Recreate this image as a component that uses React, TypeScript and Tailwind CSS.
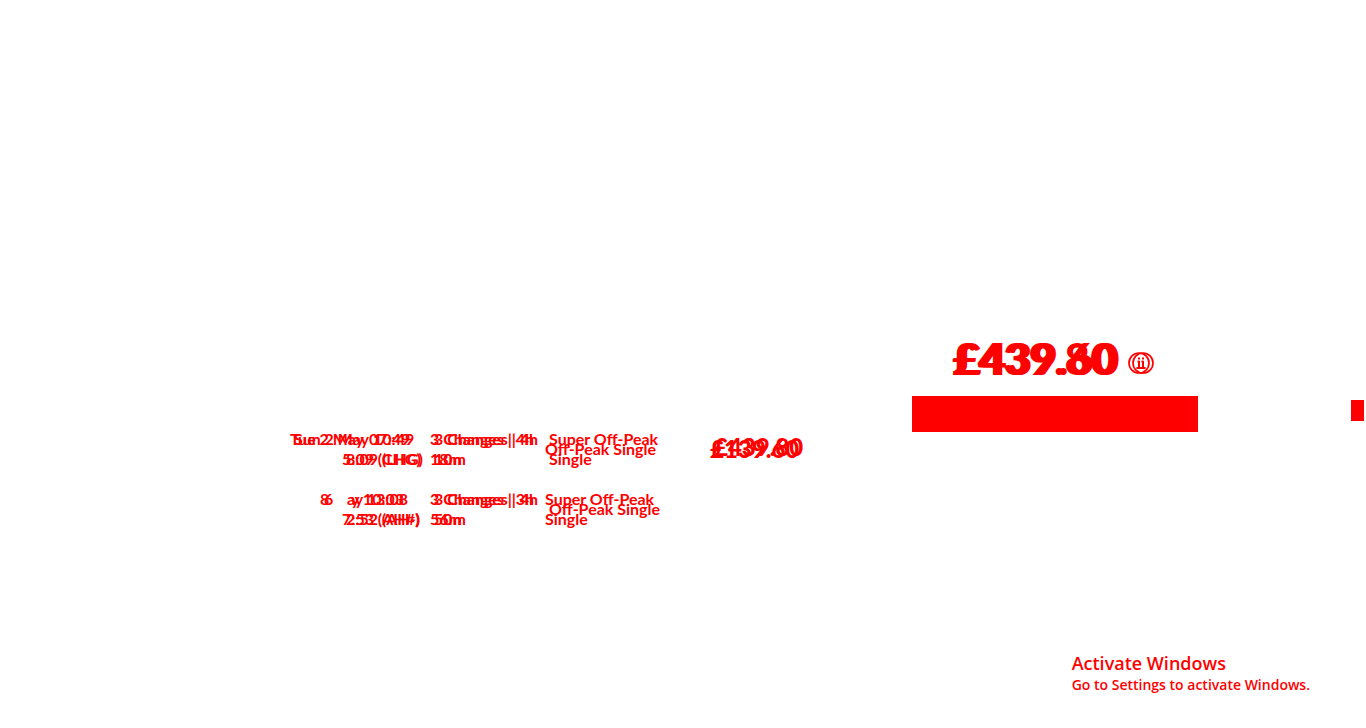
import type { ReactNode } from 'react';

/* Prints several versions of the same content over each other in one grid cell. */
function Layers({ items, className = '' }: { items: ReactNode[]; className?: string }) {
  return (
    <span className={`grid w-max ${className}`}>
      {items.map((item, i) => (
        <span key={i} className={`col-start-1 row-start-1 whitespace-nowrap ${i > 0 ? 'pl-1' : ''}`}>
          {item}
        </span>
      ))}
    </span>
  );
}

function Info({ className }: { className: string }) {
  return (
    <svg viewBox="0 0 26 22" className={className} fill="none" stroke="currentColor" role="img" aria-label="Price information">
      <ellipse cx="11" cy="11" rx="10" ry="10" strokeWidth="1.7" />
      <ellipse cx="15" cy="11" rx="10" ry="10" strokeWidth="1.7" />
      <path d="M11 9v7M15 9v7M8.500 16h9M9.500 9.500h2M13.500 9.500h2M11 5.500v2M15 5.500v2" strokeWidth="2" />
    </svg>
  );
}

type Journey = {
  dates: string[];
  times: string[];
  arrivals: string[];
  changes: string[];
  durations: string[];
  first: boolean;
};

const journeys: Journey[] = [
  {
    dates: ['Tue 2 May', 'Sun 2 May'],
    times: ['07:49', '10:49'],
    arrivals: ['5:09 (CHG)', '8:09 (LHG)'],
    changes: ['3 Changes | 4h', '3 Changes | 4h'],
    durations: ['18m', '10m'],
    first: true,
  },
  {
    dates: ['8', '6'],
    times: ['ay 13:08', 'y 10:03'],
    arrivals: ['7:53 (AH#)', '2:52 (AH-)'],
    changes: ['3 Changes | 3h', '3 Changes | 4h'],
    durations: ['56m', '50m'],
    first: false,
  },
];

function JourneyRow({ j }: { j: Journey }) {
  return (
    <tr className="h-[60px] align-top">
      <td className="w-[140px]">
        <div className={j.first ? 'flex justify-between pr-[22px]' : 'flex justify-between pr-[22px] pl-[30px]'}>
          <Layers items={j.dates} />
          <Layers items={j.times} />
        </div>
        <Layers items={j.arrivals} className="ml-[52px]" />
      </td>
      <td className="w-[115px]">
        <Layers items={j.changes} />
        <Layers items={j.durations} />
      </td>
      <td className="w-[165px]">
        <div className="grid items-center">
          <span className={j.first ? 'col-start-1 row-start-1 pl-1' : 'col-start-1 row-start-1'}>
            Super Off-Peak
            <br />
            Single
          </span>
          <span className={j.first ? 'col-start-1 row-start-1' : 'col-start-1 row-start-1 pl-1'}>Off-Peak Single</span>
        </div>
      </td>
      <td>
        {j.first && (
          <div className="grid h-10 w-max items-center text-2xl font-black">
            <span className="col-start-1 row-start-1">£139.60</span>
            <span className="col-start-1 row-start-1 pb-1 pl-1">£439.80</span>
          </div>
        )}
      </td>
    </tr>
  );
}

export default function App() {
  return (
    <div className="flex min-h-screen flex-col justify-between bg-white text-[#ff0000]">
      <main className="flex items-start pt-[336px] pl-[290px] font-['Lato',sans-serif] text-base leading-5 font-bold">
        <table className="mt-[93px] w-[622px] table-fixed border-collapse">
          <tbody>
            {journeys.map((j) => (
              <JourneyRow key={j.times[0]} j={j} />
            ))}
          </tbody>
        </table>
        <section className="w-[286px]">
          <div className="flex h-[60px] items-start gap-2 pl-10 text-[44px] leading-[44px] font-black">
            <div className="grid w-max">
              <span className="col-start-1 row-start-1">£439.80</span>
              <span className="col-start-1 row-start-1 pl-1">£439.60</span>
            </div>
            <Info className="mt-4 h-[22px] w-[26px]" />
          </div>
          <button type="button" aria-label="Continue" className="block h-9 w-full bg-[#ff0000]" />
        </section>
        <div className="mt-16 mr-0.5 ml-auto h-[21px] w-[13px] bg-[#ff0000]" />
      </main>
      <footer className="self-end pr-14 pb-[33px] font-['Open_Sans',sans-serif] font-semibold">
        <p className="text-lg leading-6">Activate Windows</p>
        <p className="text-sm leading-5">Go to Settings to activate Windows.</p>
      </footer>
    </div>
  );
}
